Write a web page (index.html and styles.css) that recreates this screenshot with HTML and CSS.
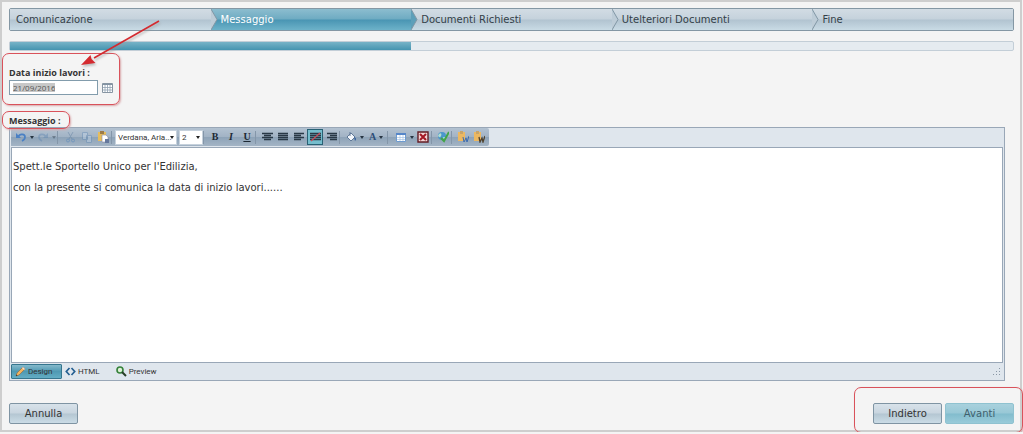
FILE: index.html
```html
<!DOCTYPE html>
<html lang="it">
<head>
<meta charset="utf-8">
<title>Messaggio</title>
<link rel="stylesheet" href="styles.css">
</head>
<body>
<main class="frame">
  <ol class="steps">
    <li class="step">Comunicazione</li>
    <li class="step current" aria-current="step"><svg class="chevron" viewBox="0 0 7 21"><path class="fill-plain" d="M0 0L6 10.500L0 21Z"/><path class="edge" d="M0 0L6 10.500L0 21"/></svg>Messaggio</li>
    <li class="step"><svg class="chevron" viewBox="0 0 7 21"><path class="fill-current" d="M0 0L6 10.500L0 21Z"/><path class="edge" d="M0 0L6 10.500L0 21"/></svg>Documenti Richiesti</li>
    <li class="step"><svg class="chevron" viewBox="0 0 7 21"><path class="fill-plain" d="M0 0L6 10.500L0 21Z"/><path class="edge" d="M0 0L6 10.500L0 21"/></svg>Utelteriori Documenti</li>
    <li class="step"><svg class="chevron" viewBox="0 0 7 21"><path class="fill-plain" d="M0 0L6 10.500L0 21Z"/><path class="edge" d="M0 0L6 10.500L0 21"/></svg>Fine</li>
  </ol>
  <div class="progress"><div class="progress-bar" style="width:40%"></div></div>

  <label class="label" for="start-date">Data inizio lavori :</label>
  <div class="date-row">
    <span class="date-box"><input class="date-input" id="start-date" type="text" value="21/09/2016"></span>
    <button class="icon-button" type="button" aria-label="Calendario"><svg width="11" height="10" viewBox="0 0 11 10"><path d="M.5.5h10v9H.5z" fill="#fff" stroke="#8795a2"/><path d="M1 1.500h9" stroke="#8192a3" stroke-width="1"/><path d="M1 4.500h9M1 7h9M3 2v7M5.500 2v7M8 2v7" stroke="#91a1b1" stroke-width=".8"/></svg></button>
  </div>
  <label class="label message-label" for="message">Messaggio :</label>

  <section class="editor">
    <div class="toolbar-row">
      <div class="toolbar">
        <button class="tool split" type="button" aria-label="Annulla modifica"><svg width="12" height="12" viewBox="0 0 12 12"><path d="M3 6c2-4 7-3 7 0 0 2-1 3-3 4" fill="none" stroke="#4a80c4" stroke-width="1.700"/><path d="M1 2v5h5z" fill="#4a80c4"/></svg><i class="caret"></i></button>
        <button class="tool split faded" type="button" aria-label="Ripeti"><svg width="12" height="12" viewBox="0 0 12 12"><path d="M9 6c-2-4-7-3-7 0 0 2 1 3 3 4" fill="none" stroke="#5b83b0" stroke-width="1.700"/><path d="M11 2v5H6z" fill="#5b83b0"/></svg><i class="caret"></i></button>
        <span class="sep wide"></span>
        <button class="tool faded" type="button" aria-label="Taglia"><svg width="12" height="12" viewBox="0 0 12 12"><path d="M3 1l4 7M8 1L4 8" stroke="#56789c"/><circle cx="3" cy="9.500" r="1.500" fill="none" stroke="#3f78b8"/><circle cx="8" cy="9.500" r="1.500" fill="none" stroke="#3f78b8"/></svg></button>
        <button class="tool faded" type="button" aria-label="Copia"><svg width="12" height="12" viewBox="0 0 12 12"><path d="M1.500 1.500h5v7h-5zM5.500 4.500h5v7h-5z" fill="#c5d8ec" stroke="#5f88b5"/></svg></button>
        <button class="tool" type="button" aria-label="Incolla"><svg width="12" height="12" viewBox="0 0 12 12"><path d="M1 1h8v9H1z" fill="#e6bd5d"/><path d="M3 0h4v3H3z" fill="#9c7b48"/><path d="M5 4h4l2 2v5H5z" fill="#fff" stroke="#8a8aa5" stroke-width=".6"/><path d="M8 8h4v4H8z" fill="#65789d"/></svg></button>
        <span class="sep"></span>
        <select class="picker font-picker" aria-label="Carattere"><option>Verdana, Aria...</option></select>
        <select class="picker size-picker" aria-label="Dimensione"><option>2</option></select>
        <span class="sep"></span>
        <button class="tool letter bold" type="button">B</button>
        <button class="tool letter italic" type="button">I</button>
        <button class="tool letter underline" type="button">U</button>
        <span class="sep"></span>
        <button class="tool" type="button" aria-label="Centra"><svg width="11" height="10" viewBox="0 0 11 10"><path d="M0 1.500h11M2 3.500h7M0 5.500h11M2 7.500h7" stroke="#293846" stroke-width="1.300"/></svg></button>
        <button class="tool" type="button" aria-label="Giustifica"><svg width="11" height="10" viewBox="0 0 11 10"><path d="M0 1.500h10M0 3.500h10M0 5.500h10M0 7.500h10" stroke="#293846" stroke-width="1.300"/></svg></button>
        <button class="tool" type="button" aria-label="Allinea a sinistra"><svg width="11" height="10" viewBox="0 0 11 10"><path d="M0 1.500h10M0 3.500h7M0 5.500h10M0 7.500h7" stroke="#293846" stroke-width="1.300"/></svg></button>
        <button class="tool pressed" type="button" aria-label="Nessun allineamento" aria-pressed="true"><svg width="11" height="10" viewBox="0 0 11 10"><path d="M0 1.500h11M0 3.500h11M0 5.500h11M0 7.500h11" stroke="#293846" stroke-width="1.400"/><path d="M1 9L10 1" stroke="#c44e5b" stroke-width="1.300"/></svg></button>
        <button class="tool" type="button" aria-label="Allinea a destra"><svg width="11" height="10" viewBox="0 0 11 10"><path d="M1 1.500h10M4 3.500h7M1 5.500h10M4 7.500h7" stroke="#293846" stroke-width="1.300"/></svg></button>
        <span class="sep"></span>
        <button class="tool split" type="button" aria-label="Colore di sfondo"><svg width="12" height="12" viewBox="0 0 12 12"><path d="M2 6l4-4 4 4-4 4z" fill="#f2f6fb" stroke="#607998"/><path d="M5 1v4" stroke="#607998"/><path d="M9 6c3 1 2 3 1 4z" fill="#315d9b"/></svg><i class="caret"></i></button>
        <button class="tool split letter font-color" type="button" aria-label="Colore del testo">A<i class="caret"></i></button>
        <span class="sep wide"></span>
        <button class="tool split" type="button" aria-label="Tabella"><svg width="12" height="12" viewBox="0 0 12 12"><path d="M1.500 2.500h9v8h-9z" fill="#fff" stroke="#6d9bd0"/><path d="M1 3h10" stroke="#5686c8" stroke-width="2"/><path d="M2 6.500h8M2 8.500h8M5 4v6M8 4v6" stroke="#a6c4e7" stroke-width=".7"/></svg><i class="caret"></i></button>
        <button class="tool" type="button" aria-label="Rimuovi formato"><svg width="12" height="12" viewBox="0 0 12 12"><path d="M1 1h10v10H1z" fill="#f1d6d7" stroke="#641c25" stroke-width="1.400"/><path d="M3 3l6 6M9 3L3 9" stroke="#a51825" stroke-width="2"/></svg></button>
        <span class="sep"></span>
        <button class="tool" type="button" aria-label="Collegamento"><svg width="12" height="12" viewBox="0 0 12 12"><circle cx="5" cy="5" r="4" fill="#4b97cc"/><path d="M2 3c2-2 3 0 2 2s-2 1-3 0zM6 6h3l-2 3z" fill="#b3dfcf"/><path d="M4 7l3 3 5-9" fill="none" stroke="#42a548" stroke-width="2"/></svg></button>
        <span class="sep"></span>
        <button class="tool" type="button" aria-label="Incolla da Word"><svg width="12" height="12" viewBox="0 0 12 12"><path d="M1 1h7v9H1z" fill="#ecb861"/><path d="M3 0h3v3H3z" fill="#c8a468"/><path d="M6 6l1 5 2-4 1 4 2-6" fill="none" stroke="#3c6cb2"/></svg></button>
        <button class="tool" type="button" aria-label="Incolla da Word senza stile"><svg width="12" height="12" viewBox="0 0 12 12"><path d="M1 1h7v9H1z" fill="#ecb861"/><path d="M3 0h3v3H3z" fill="#c8a468"/><path d="M6 6l1 5 2-4 1 4 2-6" fill="none" stroke="#51432e" stroke-width="1.300"/></svg></button>
      </div>
    </div>
    <textarea class="message" id="message" spellcheck="false">Spett.le Sportello Unico per l'Edilizia,
con la presente si comunica la data di inizio lavori......</textarea>
    <div class="modes">
      <button class="mode active" type="button"><svg width="11" height="11" viewBox="0 0 11 11"><path d="M1 10l1-3 6-6 2 2-6 6z" fill="#f3b35e" stroke="#8a6640" stroke-width=".6"/><path d="M7 2l1-1 2 2-1 1z" fill="#f5ddd2"/><path d="M1 10l.5-1.500 1 1z" fill="#222"/></svg>Design</button>
      <button class="mode" type="button"><svg width="11" height="11" viewBox="0 0 11 11"><path d="M4.500 2L1.300 5.500l3.200 3.500M6.500 2l3.200 3.500L6.500 9" fill="none" stroke="#245f91" stroke-width="1.700"/></svg>HTML</button>
      <button class="mode preview" type="button"><svg width="11" height="11" viewBox="0 0 11 11"><circle cx="4" cy="4" r="3" fill="#dff0d8" stroke="#35823a" stroke-width="1.600"/><path d="M6 6l4 4" stroke="#263d25" stroke-width="2"/></svg>Preview</button>
      <svg class="grip" width="8" height="8" viewBox="0 0 8 8"><path d="M6 0h1v1H6zM3 3h1v1H3zM6 3h1v1H6zM0 6h1v1H0zM3 6h1v1H3zM6 6h1v1H6z" fill="#8997a5"/></svg>
    </div>
  </section>

  <footer class="actions">
    <button class="action cancel" type="button">Annulla</button>
    <button class="action" type="button">Indietro</button>
    <button class="action next" type="button">Avanti</button>
  </footer>
</main>
<div class="mark mark-date"></div>
<div class="mark mark-message"></div>
<div class="mark mark-actions"></div>
<svg class="arrow" width="90" height="56" viewBox="0 0 90 56"><path d="M82 4L17 41" stroke="#d42a2f" stroke-width="1.600"/><path d="M4 48L13.500 38L14.500 42L18.500 46Z" fill="#d42a2f"/></svg>
</body>
</html>
```
FILE: styles.css
```css
* { box-sizing: border-box; }
body {
  margin: 0;
  position: relative;
  background: #f4f4f4;
  color: #333;
  font: 10px/12px "DejaVu Sans", sans-serif;
}
button, select, input, textarea { font: inherit; color: inherit; margin: 0; padding: 0; border: 0; border-radius: 0; background: none; outline: 0; }
svg { display: block; flex: none; }

.frame {
  min-height: 432px;
  margin-right: 1px;
  padding: 6px 6px 6px 7px;
  border: 2px solid #cecece;
}

.steps {
  display: grid;
  grid-template-columns: repeat(5, 1fr);
  height: 23px;
  margin: 0;
  padding: 0;
  list-style: none;
  border: 1px solid #8497a4;
  border-radius: 2px;
  background: #c4d1db;
}
.step {
  position: relative;
  padding: 0 0 0 10px;
  font-size: 10px;
  line-height: 22px;
  height: 21px;
  color: #333f48;
  background: linear-gradient(#d2dce4, #c5d2dc 48%, #b1c3d0 52%, #c9dbe5);
}
.step:first-child { padding-left: 6px; }
.step.current { color: #fff; background: linear-gradient(#8cbdcf, #6eabc2 48%, #4995b3 52%, #6db2c9); }
.chevron { position: absolute; left: 0; top: 0; width: 7px; height: 100%; }
.edge { fill: none; stroke: #8297a5; }
.fill-plain { fill: #bdccd7; }
.fill-current { fill: #5d9fb9; }

.progress { height: 10px; margin-top: 10px; border: 1px solid #c3ced7; border-radius: 2px; background: #e5ebf0; }
.progress-bar { height: 100%; background: linear-gradient(#77b3c7, #4594b0); }

.label { display: block; width: max-content; font: bold 9px/12px "Open Sans", sans-serif; margin-top: 16px; }
.date-row { display: flex; align-items: center; gap: 4px; margin-top: 1px; }
.date-box { display: flex; width: 89px; height: 15px; padding: 2px 3px; border: 1px solid #829cac; background: #fff; }
.date-input { width: 42px; height: 9px; font: 8px/9px "Open Sans", sans-serif; background: #c8c8c8; color: #555; }
.message-label { margin-top: 20px; }

.editor { display: flex; flex-direction: column; height: 254px; margin-right: 9px; border: 1px solid #99a7b7; background: #dfe6ed; }
.toolbar-row { display: flex; height: 19px; padding-left: 1px; }
.toolbar { display: flex; align-items: center; height: 18px; padding: 0 2px; border-radius: 0 2px 2px 0; background: linear-gradient(#b3c2d1, #a2b3c5 48%, #8ea3b8 52%, #a3b4c5); }
.tool { display: flex; align-items: center; justify-content: center; width: 16px; height: 16px; }
.split { width: 22px; gap: 3px; }
.faded { opacity: .4; }
.caret { border: 2px solid transparent; border-top: 3px solid #263442; border-bottom: 0; }
.sep { width: 4px; height: 13px; border-left: 1px solid #8496a9; }
.sep.wide { width: 6px; }
.letter { font: 10px/12px "Liberation Serif", serif; color: #1d2934; }
.bold { font-weight: bold; }
.italic { font-style: italic; font-weight: bold; }
.underline { font-weight: bold; text-decoration: underline; }
.font-color { font-weight: bold; color: #2c4d78; }
.pressed { border: 1px solid #286174; background: #75bdcd; }
.picker {
  appearance: none;
  height: 15px;
  padding: 0 6px 0 2px;
  font: 8px/14px Roboto, sans-serif;
  border: 1px solid #c6d1dc;
  background: #fff url("data:image/svg+xml,%3Csvg xmlns='http://www.w3.org/2000/svg' width='4' height='3'%3E%3Cpath d='M0 0h4L2 3z' fill='%23222'/%3E%3C/svg%3E") no-repeat right 2px center;
}
.font-picker { width: 62px; padding-right: 0; }
.size-picker { width: 24px; margin-left: 2px; }
.message {
  flex: 1;
  margin: 0 1px;
  padding: 8px 1px;
  border: 1px solid #99a7b7;
  background: #fff;
  line-height: 21px;
  resize: none;
}
.modes { display: flex; height: 17px; padding: 1px 3px 1px 1px; font: 8px/14px Roboto, sans-serif; }
.mode { display: flex; align-items: center; gap: 2px; padding: 0 3px; }
.mode.active { width: 51px; border: 1px solid #35758e; border-radius: 1px; background: linear-gradient(#85b9cb, #4f99b3 50%, #63adc4); }
.preview { margin-left: 10px; }
.grip { margin: 4px 0 0 auto; }

.actions { display: flex; gap: 3px; margin-top: 22px; }
.action { width: 69px; height: 21px; border: 1px solid #7f94a3; border-radius: 2px; background: linear-gradient(#d8e2ea, #c8d5df 48%, #b4c6d2 52%, #cbdce6); }
.cancel { margin-right: auto; }
.next { border-color: #8fc2d0; color: #40606d; background: linear-gradient(#a9d1dd, #98c8d6 48%, #82bccd 52%, #99cbd9); }

.mark { position: absolute; border: 1px solid #d9525b; border-radius: 7px; box-shadow: 1px 1px 2px #d9a9ac; pointer-events: none; }
.mark-date { left: 2px; top: 53px; width: 118px; height: 52px; }
.mark-message { left: 2px; top: 111px; width: 68px; height: 18px; }
.mark-actions { right: 0; top: 387px; width: 169px; height: 46px; }
.arrow { position: absolute; left: 77px; top: 17px; filter: drop-shadow(1px 2px 1px #9999); pointer-events: none; }
```
